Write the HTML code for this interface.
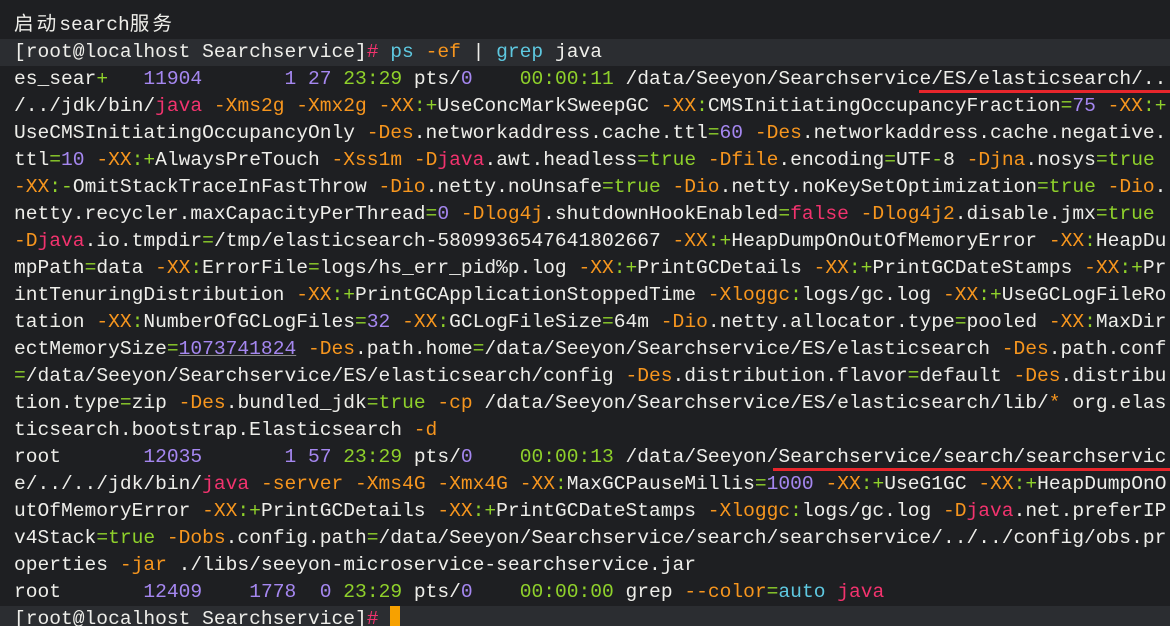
<!DOCTYPE html>
<html><head><meta charset="utf-8"><style>
html,body{margin:0;padding:0;background:#1e1f22;width:1170px;height:626px;overflow:hidden}
pre{margin:0;padding:12px 0 0 14px;font-family:"Liberation Mono","Noto Sans CJK SC",monospace;font-size:19.6px;line-height:27px;color:#eeeeea;white-space:pre}
.l{display:block;height:27px;position:relative}
.band{background:#2b2d31;margin-left:-14px;padding-left:14px}
.o{color:#f7961e}.g{color:#8fd12b}.p{color:#a587f0}.r{color:#f2336e}.c{color:#5ec8e0}
.u{text-decoration:underline;text-decoration-color:#888}
.red{position:absolute;height:3px;background:#e8262c}
.cur{display:inline-block;width:10px;height:22px;background:#f7a100;vertical-align:-4px}
.cj{letter-spacing:3px}
</style></head><body><pre><span class="l"><span class="cj">启动</span>search<span class="cj">服务</span></span><span class="l band">[root@localhost Searchservice]<span class="r">#</span> <span class="c">ps</span> <span class="o">-ef</span> | <span class="c">grep</span> java</span><span class="l">es_sear<span class="g">+</span>   <span class="p">11904</span>       <span class="p">1</span> <span class="p">27</span> <span class="g">23:29</span> pts/<span class="p">0</span>    <span class="g">00:00:11</span> /data/Seeyon/Searchservice/ES/elasticsearch/..<span class="red" style="left:905px;width:253px;top:24px"></span></span><span class="l">/../jdk/bin/<span class="r">java</span> <span class="o">-Xms2g</span> <span class="o">-Xmx2g</span> <span class="o">-XX</span><span class="g">:+</span>UseConcMarkSweepGC <span class="o">-XX</span><span class="g">:</span>CMSInitiatingOccupancyFraction<span class="g">=</span><span class="p">75</span> <span class="o">-XX</span><span class="g">:+</span></span><span class="l">UseCMSInitiatingOccupancyOnly <span class="o">-Des</span>.networkaddress.cache.ttl<span class="g">=</span><span class="p">60</span> <span class="o">-Des</span>.networkaddress.cache.negative.</span><span class="l">ttl<span class="g">=</span><span class="p">10</span> <span class="o">-XX</span><span class="g">:+</span>AlwaysPreTouch <span class="o">-Xss1m</span> <span class="o">-D</span><span class="r">java</span>.awt.headless<span class="g">=true</span> <span class="o">-Dfile</span>.encoding<span class="g">=</span>UTF<span class="g">-</span>8 <span class="o">-Djna</span>.nosys<span class="g">=true</span></span><span class="l"><span class="o">-XX</span><span class="g">:-</span>OmitStackTraceInFastThrow <span class="o">-Dio</span>.netty.noUnsafe<span class="g">=true</span> <span class="o">-Dio</span>.netty.noKeySetOptimization<span class="g">=true</span> <span class="o">-Dio</span>.</span><span class="l">netty.recycler.maxCapacityPerThread<span class="g">=</span><span class="p">0</span> <span class="o">-Dlog4j</span>.shutdownHookEnabled<span class="g">=</span><span class="r">false</span> <span class="o">-Dlog4j2</span>.disable.jmx<span class="g">=true</span></span><span class="l"><span class="o">-D</span><span class="r">java</span>.io.tmpdir<span class="g">=</span>/tmp/elasticsearch-5809936547641802667 <span class="o">-XX</span><span class="g">:+</span>HeapDumpOnOutOfMemoryError <span class="o">-XX</span><span class="g">:</span>HeapDu</span><span class="l">mpPath<span class="g">=</span>data <span class="o">-XX</span><span class="g">:</span>ErrorFile<span class="g">=</span>logs/hs_err_pid%p.log <span class="o">-XX</span><span class="g">:+</span>PrintGCDetails <span class="o">-XX</span><span class="g">:+</span>PrintGCDateStamps <span class="o">-XX</span><span class="g">:+</span>Pr</span><span class="l">intTenuringDistribution <span class="o">-XX</span><span class="g">:+</span>PrintGCApplicationStoppedTime <span class="o">-Xloggc</span><span class="g">:</span>logs/gc.log <span class="o">-XX</span><span class="g">:+</span>UseGCLogFileRo</span><span class="l">tation <span class="o">-XX</span><span class="g">:</span>NumberOfGCLogFiles<span class="g">=</span><span class="p">32</span> <span class="o">-XX</span><span class="g">:</span>GCLogFileSize<span class="g">=</span>64m <span class="o">-Dio</span>.netty.allocator.type<span class="g">=</span>pooled <span class="o">-XX</span><span class="g">:</span>MaxDir</span><span class="l">ectMemorySize<span class="g">=</span><span class="p u">1073741824</span> <span class="o">-Des</span>.path.home<span class="g">=</span>/data/Seeyon/Searchservice/ES/elasticsearch <span class="o">-Des</span>.path.conf</span><span class="l"><span class="g">=</span>/data/Seeyon/Searchservice/ES/elasticsearch/config <span class="o">-Des</span>.distribution.flavor<span class="g">=</span>default <span class="o">-Des</span>.distribu</span><span class="l">tion.type<span class="g">=</span>zip <span class="o">-Des</span>.bundled_jdk<span class="g">=true</span> <span class="o">-cp</span> /data/Seeyon/Searchservice/ES/elasticsearch/lib/<span class="o">*</span> org.elas</span><span class="l">ticsearch.bootstrap.Elasticsearch <span class="o">-d</span></span><span class="l">root       <span class="p">12035</span>       <span class="p">1</span> <span class="p">57</span> <span class="g">23:29</span> pts/<span class="p">0</span>    <span class="g">00:00:13</span> /data/Seeyon/Searchservice/search/searchservic<span class="red" style="left:759px;width:399px;top:24px"></span></span><span class="l">e/../../jdk/bin/<span class="r">java</span> <span class="o">-server</span> <span class="o">-Xms4G</span> <span class="o">-Xmx4G</span> <span class="o">-XX</span><span class="g">:</span>MaxGCPauseMillis<span class="g">=</span><span class="p">1000</span> <span class="o">-XX</span><span class="g">:+</span>UseG1GC <span class="o">-XX</span><span class="g">:+</span>HeapDumpOnO</span><span class="l">utOfMemoryError <span class="o">-XX</span><span class="g">:+</span>PrintGCDetails <span class="o">-XX</span><span class="g">:+</span>PrintGCDateStamps <span class="o">-Xloggc</span><span class="g">:</span>logs/gc.log <span class="o">-D</span><span class="r">java</span>.net.preferIP</span><span class="l">v4Stack<span class="g">=true</span> <span class="o">-Dobs</span>.config.path<span class="g">=</span>/data/Seeyon/Searchservice/search/searchservice/../../config/obs.pr</span><span class="l">operties <span class="o">-jar</span> ./libs/seeyon-microservice-searchservice.jar</span><span class="l">root       <span class="p">12409</span>    <span class="p">1778</span>  <span class="p">0</span> <span class="g">23:29</span> pts/<span class="p">0</span>    <span class="g">00:00:00</span> grep <span class="o">--color</span><span class="g">=</span><span class="c">auto</span> <span class="r">java</span></span><span class="l band">[root@localhost Searchservice]<span class="r">#</span> <span class="cur"></span></span></pre></body></html>
